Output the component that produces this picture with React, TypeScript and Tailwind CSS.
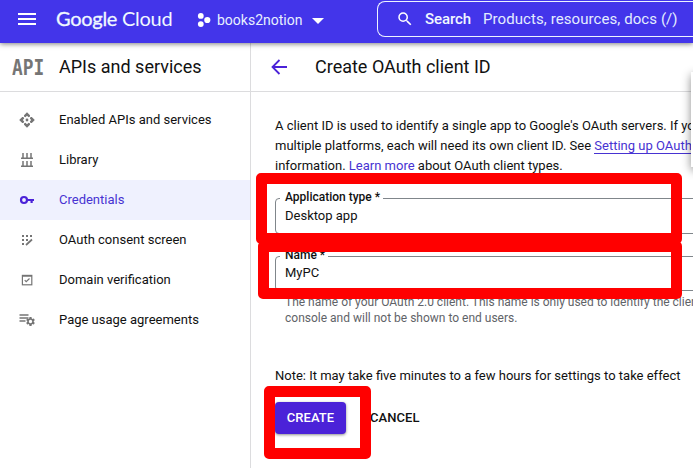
import React from "react";
import { MdSearch, MdSettings } from "react-icons/md";

function EnabledIcon() {
  return (
    <svg width="16" height="16" viewBox="0 0 16 16" fill="#757575">
      <path d="M8 0.2L11 3.2V4.4L9.6 5.2L8 3.8L6.4 5.2L5 4.4V3.2z" />
      <path d="M8 15.8L5 12.8V11.6L6.4 10.8L8 12.2L9.6 10.8L11 11.6V12.8z" />
      <path d="M0.2 8L3.2 5H4.4L5.2 6.4L3.8 8L5.2 9.6L4.4 11H3.2z" />
      <path d="M15.8 8L12.8 11H11.6L10.8 9.6L12.2 8L10.8 6.4L11.6 5H12.8z" />
      <circle cx="8" cy="8" r="1.4" />
    </svg>
  );
}

function LibraryIcon() {
  return (
    <svg width="14" height="16" viewBox="0 0 14 16" fill="none" stroke="#757575" strokeWidth="1.5">
      <path d="M1 6.2H13M3 1V6.2M7 1V6.2M11 1V6.2M1 14.2H13M3 9V14.2M7 9V14.2M11 9V14.2" />
    </svg>
  );
}

function KeyIcon() {
  return (
    <svg width="16" height="10" viewBox="0 0 16 10" fill="none" stroke="#4b22d8" strokeWidth="2.2">
      <circle cx="5" cy="5" r="3" />
      <path d="M8 5H15M12.6 5V8" />
    </svg>
  );
}

function ConsentIcon() {
  return (
    <svg width="14" height="14" viewBox="0 0 14 14" fill="#757575">
      <path d="M2 2h2v2H2zM6 2h2v2H6zM10 2h2v2h-2zM2 6h2v2H2zM6 6h2v2H6zM2 10h2v2H2z" />
      <path d="M6 12L12 6.5" stroke="#757575" strokeWidth="1.7" />
    </svg>
  );
}

function DomainIcon() {
  return (
    <svg width="12" height="12" viewBox="0 0 12 12" fill="none" stroke="#757575" strokeWidth="1.2">
      <rect x="1.4" y="1.4" width="9.4" height="9.4" />
      <path d="M1 2.2H11M3.7 6.2L5.2 7.7L8.5 4.5" />
    </svg>
  );
}

function AgreementsIcon() {
  return (
    <span className="flex h-4 w-4 items-end">
      <svg width="9" height="16" viewBox="0 0 9 16" stroke="#757575" strokeWidth="1.5" className="shrink-0 overflow-visible">
        <path d="M0.5 3H9.5M0.5 6H9.5M0.5 9H6.5" />
      </svg>
      <MdSettings size={11} color="#757575" className="-ml-[3px] mb-px shrink-0" />
    </span>
  );
}

const navItems = [
  { label: "Enabled APIs and services", icon: <EnabledIcon /> },
  { label: "Library", icon: <LibraryIcon /> },
  { label: "Credentials", icon: <KeyIcon />, active: true },
  { label: "OAuth consent screen", icon: <ConsentIcon /> },
  { label: "Domain verification", icon: <DomainIcon /> },
  { label: "Page usage agreements", icon: <AgreementsIcon /> },
];

function TopBar() {
  return (
    <header className="relative z-10 flex h-[43px] shrink-0 items-start bg-[#4335ea] text-white shadow-[0_1px_5px_rgba(0,0,0,0.5)]">
      <svg width="18" height="12" viewBox="0 0 18 12" fill="#fff" className="mt-[13px] ml-[18px] shrink-0">
        <path d="M0 0h18v2H0zM0 5h18v2H0zM0 10h18v2H0z" />
      </svg>
      <div className="mt-[3px] ml-5 w-[139px] shrink-0 font-['Lato',sans-serif] text-[20px] leading-[30px] tracking-[-0.28px] text-[#f0f8ff]">
        <span className="[-webkit-text-stroke:0.3px_#f0f8ff]">Google</span> Cloud
      </div>
      <svg width="14" height="16" viewBox="0 0 14 16" fill="#fff" className="mt-3 ml-[2px] shrink-0">
        <circle cx="3.8" cy="3.9" r="2.9" />
        <circle cx="10.3" cy="8" r="3.1" />
        <circle cx="3.8" cy="12.1" r="2.9" />
      </svg>
      <span className="mt-[10px] ml-[6px] w-[95px] shrink-0 text-sm leading-5 text-[#e8f0fe]">books2notion</span>
      <svg width="12" height="6" viewBox="0 0 12 6" fill="#fff" className="mt-[18px] shrink-0">
        <path d="M0 0H12L6 6z" />
      </svg>
      <div className="mt-px ml-[53px] flex h-9 w-[316px] shrink-0 items-center rounded-l-lg border border-r-0 border-[#eef3ff] pl-[18px] text-[15px]">
        <MdSearch size={18} className="shrink-0" />
        <span className="ml-[11px] w-[58px] shrink-0 font-medium tracking-[-0.1px] text-[#f0f8ff]">Search</span>
        <span className="tracking-[0.08px] text-[#e3edff]">Products, resources, docs (/)</span>
      </div>
    </header>
  );
}

function Sidebar() {
  return (
    <aside className="flex w-[251px] shrink-0 flex-col border-r border-[#dcdcde]">
      <div className="flex h-[49px] shrink-0 items-center border-b border-[#dcdcde]">
        <span className="mt-px ml-3 w-[47px] origin-left scale-x-[0.81] font-['DejaVu_Sans_Mono',monospace] text-[22px] leading-none font-bold text-[#757575]">API</span>
        <h2 className="text-lg leading-6">APIs and services</h2>
      </div>
      <nav className="pt-2">
        {navItems.map((item) => (
          <div
            key={item.label}
            className={
              item.active
                ? "flex h-10 items-center bg-[#eff1fe] text-[13px] text-[#4733d2]"
                : "flex h-10 items-center text-[13px]"
            }
          >
            <span className="ml-[18px] flex w-[18px] justify-center">{item.icon}</span>
            <span className="ml-[23px]">{item.label}</span>
          </div>
        ))}
      </nav>
    </aside>
  );
}

function Field({ label, value, className }: { label: string; value: string; className: string }) {
  return (
    <fieldset className={`w-[470px] rounded border border-[#80868b] pl-1 ${className}`}>
      <legend className="h-4 pr-[3px] pl-[5px] text-xs leading-[14px] font-medium">{label}</legend>
      <div className="pl-[5px] text-[13px] leading-5">{value}</div>
    </fieldset>
  );
}

function ClientForm() {
  return (
    <main className="flex w-[442px] min-w-0 flex-col overflow-hidden">
      <div className="flex h-[49px] shrink-0 items-center border-b border-[#dcdcde]">
        <svg width="16" height="16" viewBox="0 0 16 16" fill="none" stroke="#4b22d8" strokeWidth="1.8" className="ml-5">
          <path d="M16 8H2M8.5 1L1.5 8L8.5 15" />
        </svg>
        <h1 className="ml-7 text-lg leading-6">Create OAuth client ID</h1>
      </div>
      <div className="flex flex-col pl-6 text-[13px]">
        <div className="mt-6 h-[74px] leading-5">
          <p>A client ID is used to identify a single app to Google's OAuth servers. If you</p>
          <p>
            multiple platforms, each will need its own client ID. See{" "}
            <span className="border-b border-[#4733d2] text-[#4733d2]">Setting up OAuth</span>
          </p>
          <p>
            information. <span className="text-[#4733d2]">Learn more</span> about OAuth client types.
          </p>
        </div>
        <Field label="Application type *" value="Desktop app" className="h-[44px]" />
        <Field label="Name *" value="MyPC" className="mt-[14px] h-[43px] [&>div]:-mt-px" />
        <div className="mt-[3px] h-8 pl-[10px] text-xs leading-4 text-[#5f6368]">
          <p>The name of your OAuth 2.0 client. This name is only used to identify the client</p>
          <p>console and will not be shown to end users.</p>
        </div>
        <p className="mt-10 leading-5">Note: It may take five minutes to a few hours for settings to take effect</p>
        <div className="mt-4 flex font-medium tracking-[0.05px]">
          <button className="h-8 w-[71px] rounded bg-[#4b22d8] text-white shadow-[0_1px_3px_rgba(0,0,0,0.45)]">CREATE</button>
          <button className="ml-6 h-8">CANCEL</button>
        </div>
      </div>
    </main>
  );
}

export default function App() {
  return (
    <div className="relative flex h-[468px] w-[693px] flex-col overflow-hidden bg-white font-['Roboto',sans-serif] whitespace-nowrap text-[#111]">
      <TopBar />
      <div className="flex grow">
        <Sidebar />
        <ClientForm />
      </div>
      <div className="absolute top-[72px] left-[691px] h-[95px] w-10 bg-white shadow-[0_3px_9px_rgba(0,0,0,0.45)]" />
      <div className="absolute top-[173px] left-[256px] h-[71px] w-[426px] rounded-[5px] border-[11px] border-[#ff0000]" />
      <div className="absolute top-[241px] left-[258px] h-[58px] w-[424px] rounded-[5px] border-[11px] border-[#ff0000]" />
      <div className="absolute top-[386px] left-[264px] h-[73px] w-[107px] rounded-[5px] border-[11px] border-[#ff0000]" />
    </div>
  );
}
